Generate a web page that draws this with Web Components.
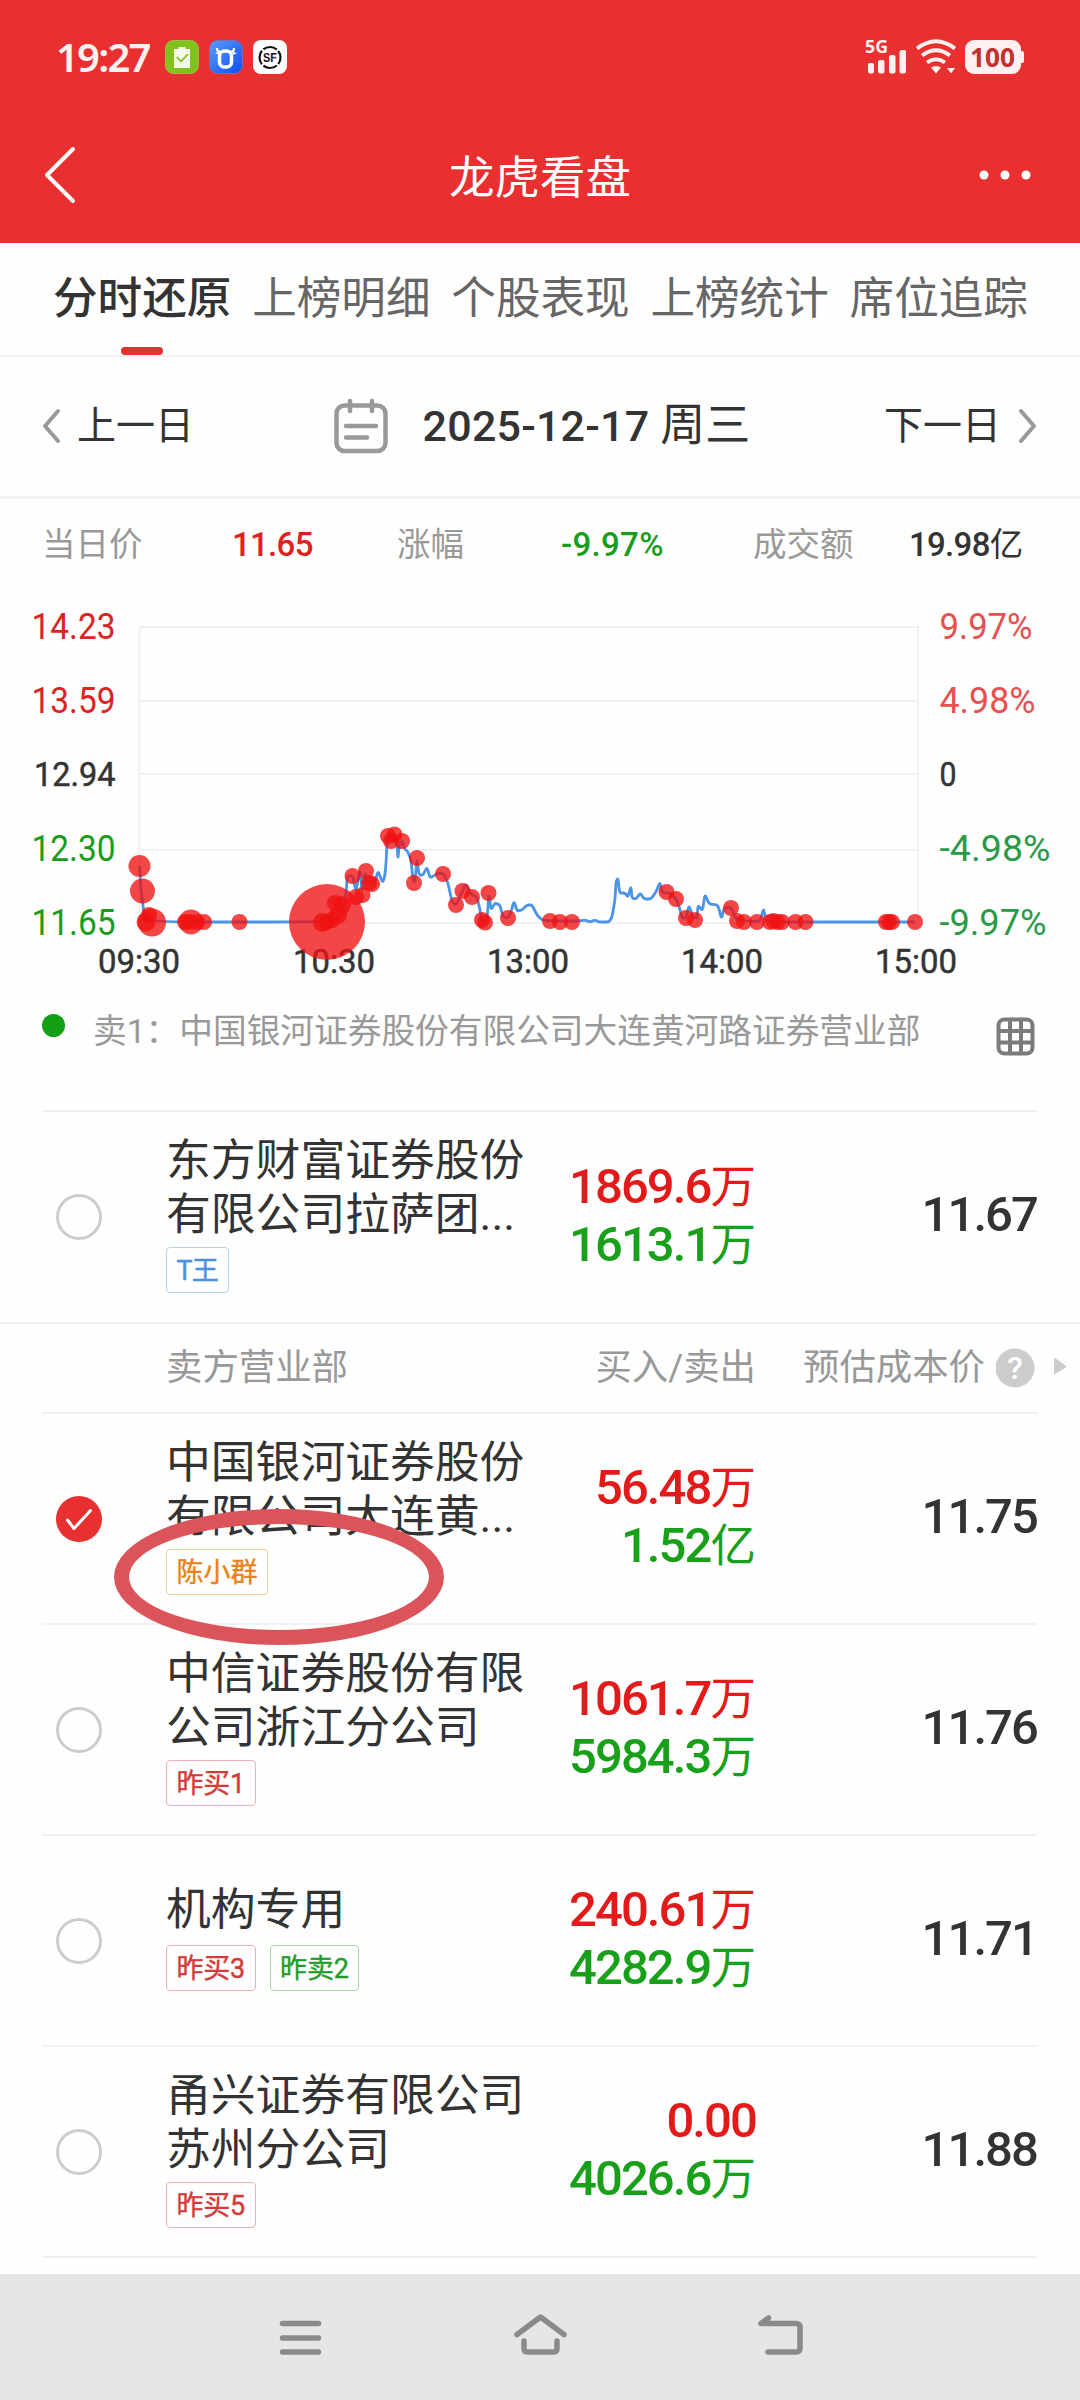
<!DOCTYPE html>
<html lang="zh-CN">
<head>
<meta charset="utf-8">
<title>龙虎看盘</title>
<style>
  body {
    margin: 0;
    background: #fefefe;
    color: #333;
    font-family: Roboto, "Noto Sans CJK SC", sans-serif;
  }
</style>
</head>
<body>
<lh-app></lh-app>

<script>
class LhStatusBar extends HTMLElement {
  constructor() {
    super();
    this.attachShadow({ mode: "open" });
  }

  static get styles() {
    return /* css */`
      :host {
        display: flex;
        align-items: center;
        justify-content: space-between;
        height: 114px;
        padding: 0 56px;
        box-sizing: border-box;
        color: #fff0f0;
      }

      .group {
        display: flex;
        align-items: center;
      }

      .time {
        font: 600 40px/48px "Noto Sans", sans-serif;
        letter-spacing: -1.8px;
        width: 109px;
        white-space: nowrap;
      }

      .apps {
        display: flex;
        gap: 10px;
      }

      svg {
        display: block;
      }
    `;
  }

  connectedCallback() {
    this.shadowRoot.innerHTML = /* html */`
    <style>${LhStatusBar.styles}</style>
    <div class="group">
      <div class="time">19:27</div>
      <div class="apps">
        <svg width="34" height="34" viewBox="0 0 34 34">
          <rect x=".5" y=".5" width="33" height="33" rx="8" fill="#7fc31c" stroke="#a9b84a"/>
          <path d="M9 9h4.500V7h7v2H25v19H9z" fill="#f3f8e8"/>
          <path d="M12 17l4 4.500 7-7.500" fill="none" stroke="#7fc31c" stroke-width="1.800"/>
        </svg>
        <svg width="34" height="34" viewBox="0 0 34 34">
          <defs>
            <linearGradient id="blue" x1="0" y1="0" x2="1" y2="1">
              <stop offset="0" stop-color="#5c9cff"/>
              <stop offset="1" stop-color="#0a50ee"/>
            </linearGradient>
          </defs>
          <rect x=".5" y=".5" width="33" height="33" rx="8" fill="url(#blue)" stroke="#7d6bb8"/>
          <path d="M8 8c0 4 2 4 5 4M25 8c0 4-2 4-5 4" fill="none" stroke="#fff" stroke-width="2.200"/>
          <path d="M6 13l4-1v3zM28 13l-4-1v3z" fill="#fff"/>
          <rect x="10.500" y="11" width="12" height="16" rx="5" fill="none" stroke="#fff" stroke-width="3.500"/>
        </svg>
        <svg width="34" height="34" viewBox="0 0 34 34">
          <rect width="34" height="34" rx="8" fill="#fff"/>
          <circle cx="17" cy="17.500" r="10.500" fill="none" stroke="#111" stroke-width="2.200" stroke-dasharray="14.500 2" stroke-dashoffset="-9"/>
          <text x="10" y="22" font-family="Liberation Sans" font-weight="700" font-size="12.500" textLength="14" lengthAdjust="spacingAndGlyphs" fill="#111">SF</text>
          <circle cx="22" cy="17.500" r="1" fill="#e33"/>
        </svg>
      </div>
    </div>
    <svg width="160" height="56" viewBox="0 -10 160 56" fill="#fff0f0">
      <text x="1" y="13.500" font-family="Open Sans" font-weight="700" font-size="18" textLength="23" lengthAdjust="spacingAndGlyphs">5G</text>
      <rect x="4" y="24" width="6" height="10.500" rx="2"/>
      <rect x="14" y="21" width="6.500" height="13.500" rx="2"/>
      <rect x="25" y="16" width="6.500" height="18.500" rx="2"/>
      <rect x="35.500" y="11" width="6.500" height="23.500" rx="2"/>
      <g fill="none" stroke="#fff0f0" stroke-width="4">
        <path d="M53 9.500Q72 -5 91 9.500"/>
        <path d="M58 16.500Q72 6 86 16.500"/>
        <path d="M63 23.500Q72 17 81 23.500"/>
      </g>
      <path d="M67 28.500q5-3 10 0l-5 6zM83 29h8l-4 5.500z"/>
      <rect x="101" y="1" width="56" height="34" rx="9"/>
      <rect x="153" y="12" width="7" height="12" rx="2"/>
      <text x="106" y="28" font-family="Open Sans" font-weight="700" font-size="27" textLength="45" lengthAdjust="spacingAndGlyphs" fill="#c33032">100</text>
    </svg>`;
  }
}
customElements.define("lh-status-bar", LhStatusBar);

class LhTitleBar extends HTMLElement {
  constructor() {
    super();
    this.attachShadow({ mode: "open" });
  }

  static get styles() {
    return /* css */`
      :host {
        display: grid;
        grid-template-columns: 1fr auto 1fr;
        align-items: center;
        height: 129px;
        padding: 0 49px 7px 44px;
        box-sizing: border-box;
        color: #fff;
      }

      .title {
        font-size: 45.500px;
        line-height: 54px;
        padding: 7px 0 0 5px;
      }

      .more {
        justify-self: end;
      }

      svg {
        display: block;
      }
    `;
  }

  connectedCallback() {
    this.shadowRoot.innerHTML = /* html */`
    <style>${LhTitleBar.styles}</style>
    <svg width="32" height="60" viewBox="0 0 32 60"><path d="M29 4L3 30l26 26" fill="none" stroke="#fff" stroke-width="4" stroke-linecap="round" stroke-linejoin="round"/></svg>
    <div class="title"><slot></slot></div>
    <svg class="more" width="52" height="10" viewBox="0 0 52 10" fill="#fff">
      <circle cx="5" cy="5" r="4.500"/><circle cx="26" cy="5" r="4.500"/><circle cx="47" cy="5" r="4.500"/>
    </svg>`;
  }
}
customElements.define("lh-title-bar", LhTitleBar);

class LhTabs extends HTMLElement {
  constructor() {
    super();
    this.attachShadow({ mode: "open" });
  }

  static get styles() {
    return /* css */`
      :host {
        display: flex;
        justify-content: space-between;
        height: 114px;
        padding: 0 52px;
        box-sizing: border-box;
        border-bottom: 2px solid #f2f2f2;
      }

      .tab {
        display: flex;
        flex-direction: column;
        justify-content: space-between;
        align-items: center;
        padding-top: 29px;
        font-size: 44.600px;
        line-height: 54px;
        color: #666;
      }

      .tab.active {
        color: #333;
        font-weight: 500;
        padding-left: 1px;
      }

      .tab.active::after {
        content: "";
        width: 42px;
        height: 8px;
        border-radius: 4px;
        background: #e83030;
      }
    `;
  }

  connectedCallback() {
    const tabs = this.getAttribute("items").split(",");
    this.shadowRoot.innerHTML = /* html */`
    <style>${LhTabs.styles}</style>
    ${tabs.map((tab, i) => `<div class="tab ${i === 0 ? "active" : ""}">${tab}</div>`).join("")}`;
  }
}
customElements.define("lh-tabs", LhTabs);

class LhDateNav extends HTMLElement {
  constructor() {
    super();
    this.attachShadow({ mode: "open" });
  }

  static get styles() {
    return /* css */`
      :host {
        display: flex;
        align-items: center;
        justify-content: space-between;
        height: 142px;
        padding: 0 40px 2px 41px;
        box-sizing: border-box;
        border-bottom: 3px solid #f4f4f4;
        font-size: 39px;
        line-height: 48px;
      }

      .step {
        display: flex;
        align-items: center;
        gap: 15px;
      }

      .day {
        display: flex;
        align-items: center;
        font-size: 45px;
        padding-left: 6px;
      }

      .day svg {
        margin-right: 35px;
      }

      .num {
        font-size: 43px;
        font-weight: 500;
        letter-spacing: 0.2px;
        margin-right: 11px;
      }

      svg {
        display: block;
        fill: none;
        stroke: #999;
        stroke-linecap: round;
        stroke-linejoin: round;
      }
    `;
  }

  connectedCallback() {
    this.shadowRoot.innerHTML = /* html */`
    <style>${LhDateNav.styles}</style>
    <div class="step">
      <svg width="21" height="36" viewBox="0 0 21 36"><path d="M17 3L4 18l13 15" stroke-width="4"/></svg>
      <span>上一日</span>
    </div>
    <div class="day">
      <svg width="54" height="56" viewBox="0 0 54 56" stroke-width="4.500">
        <rect x="2.500" y="7.500" width="49" height="45.500" rx="8"/>
        <path d="M16 3v10M38 3v10M12 28h30M12 39.500h21"/>
      </svg>
      <span class="num">2025-12-17</span><span>周三</span>
    </div>
    <div class="step">
      <span>下一日</span>
      <svg width="24" height="36" viewBox="0 0 24 36"><path d="M5 3l13 15L5 33" stroke-width="4"/></svg>
    </div>`;
  }
}
customElements.define("lh-date-nav", LhDateNav);

class LhDayStats extends HTMLElement {
  constructor() {
    super();
    this.attachShadow({ mode: "open" });
  }

  static get styles() {
    return /* css */`
      :host {
        display: grid;
        grid-template-columns: 190px 165px 164px 192px 156px auto;
        align-items: center;
        height: 91px;
        padding-left: 42px;
        box-sizing: border-box;
        font-size: 33.500px;
        line-height: 40px;
        color: #999;
      }

      .num {
        font-weight: 500;
        font-size: 33px;
        letter-spacing: -0.7px;
      }

      .up { color: #e02020; }

      .down {
        color: #189c1b;
        letter-spacing: 0.3px;
      }

      .total { color: #333; }
    `;
  }

  connectedCallback() {
    this.shadowRoot.innerHTML = /* html */`
    <style>${LhDayStats.styles}</style>
    <span>当日价</span><span class="num up">11.65</span>
    <span>涨幅</span><span class="num down">-9.97%</span>
    <span>成交额</span><span class="total"><span class="num">19.98</span>亿</span>`;
  }
}
customElements.define("lh-day-stats", LhDayStats);

// y axis rows: [y, price, price colour, percent, percent width, percent colour]
const AXIS = [
  [627, "14.23", "#dd2222", "9.97%", 93, "#e85050"],
  [701, "13.59", "#dd2222", "4.98%", 96, "#e85050"],
  [774, "12.94", "#333", "0", 17, "#333"],
  [850, "12.30", "#199c1c", "-4.98%", 111, "#2a9a48"],
  [923, "11.65", "#199c1c", "-9.97%", 107, "#2a9a48"]
];

const TIMES = [[139, "09:30"], [334, "10:30"], [528, "13:00"], [722, "14:00"], [916, "15:00"]];

const PRICE = `139.5,866 141,890 143.6,910 145,922 324,922 342,917 346,897 347,878 350,875 353,877 356,892
  360,868 362,893 365,872 367,882 372,883 375,882 378,871 381,879 383,882 385,875 386,863 387,843 389,835
  395,835 397,845 398,859 399,847 402,840 404,848 408,852 411,860 413,880 415,882 417,858 419,875 423,875
  427,867 430,878 435,875 438,873 444,874 448,883 452,902 456,905 460,897 466,883 470,894 477,897 480,910
  482,922 487,920 489,893 491,910 495,903 500,905 503,917 508,918 511,912 514,901 517,911 522,910 527,905
  532,905 537,915 542,920 550,921 580,921 585,920 590,922 595,920 599,922 609,922 612,917 615,900 616,882
  618,878 619.5,893 625,893 628,897 631,886 632,898 636,899 640.5,893 644,899 651,899 656,892 660,882
  662,893 671,893 678,902 682,918 686,918 689,905 693,917 697,918 698,905 702.5,911 705,894 709,904
  718,905 721.5,919 724,908 731,907 736,920 760,922 763.5,908 766,921 780,922 915,922`;

// trades: [x, y, radius], radius 8 when left out
const TRADES = [
  [139.5, 866, 11], [142.5, 891, 12.5], [149, 915], [146, 922, 9.5], [152, 922.5, 14],
  [185, 922], [189, 922], [191, 922, 12.5], [197, 922], [204, 922], [239.5, 922],
  [327, 922, 38], [322.5, 922.5, 9.5], [327, 922], [332, 920], [338, 915, 9], [335, 903], [342, 905, 9],
  [352.5, 876], [356, 897], [362.5, 895], [366, 871], [369, 883], [372, 884],
  [388, 836], [391, 841], [394.5, 834.5], [402, 841], [414, 883], [417, 858], [443, 874],
  [456, 905], [462.5, 891], [472, 897], [482, 920], [485, 922.5], [488.5, 893], [508, 918],
  [550, 921], [560, 922], [572, 922], [666.5, 892], [676, 899], [686, 918], [695, 920],
  [731, 908], [737, 921], [744, 922], [757, 922], [770, 922], [773.5, 921], [777.6, 922],
  [782, 922], [795.5, 922], [805.5, 922], [886, 922], [889, 922], [892, 922], [915, 922]
];

class LhChart extends HTMLElement {
  constructor() {
    super();
    this.attachShadow({ mode: "open" });
  }

  static get styles() {
    return /* css */`
      :host {
        display: block;
        height: 395px;
      }

      svg {
        display: block;
        font-family: Roboto, sans-serif;
      }

      .grid {
        fill: none;
        stroke: #f1f1f1;
        stroke-width: 2;
      }

      .axis { font-size: 36px; }
      .zero { font-size: 34px; }
      .time { font-size: 34px; fill: #333; }

      /* thin outline: between regular and medium weight */
      .zero, .time {
        stroke: #333;
        stroke-width: 0.5;
      }

      .price {
        fill: none;
        stroke: #4a94ea;
        stroke-width: 2.8;
        stroke-linejoin: round;
      }

      .trades {
        fill: #f01212;
        fill-opacity: 0.78;
      }
    `;
  }

  // rounds the corners of the polyline with quadratic midpoints
  get pricePath() {
    const points = PRICE.trim().split(/\s+/).map(p => p.split(",").map(Number));
    let d = `M${points[0]}`;
    for (let i = 1; i < points.length - 1; i++) {
      const [x, y] = points[i];
      const [nx, ny] = points[i + 1];
      const [px, py] = points[i - 1];
      d += `L${x - (x - px) * 0.3} ${y - (y - py) * 0.3}Q${x} ${y} ${x + (nx - x) * 0.3} ${y + (ny - y) * 0.3}`;
    }
    return `${d}L${points[points.length - 1]}`;
  }

  connectedCallback() {
    this.shadowRoot.innerHTML = /* html */`
    <style>${LhChart.styles}</style>
    <svg width="1080" height="395" viewBox="0 590 1080 395">
      <path class="grid" d="${AXIS.map(([y]) => `M139 ${y}H918`).join("")}M139.500 626V923M918 626V923"/>
      ${AXIS.map(([y, price, color, percent, width, percentColor], i) => {
        const base = [639, 713, 785.5, 860.5, 934.5][i];
        const type = i === 2 ? "axis zero" : "axis";
        const x = i === 2 ? 34 : 31.5;
        return `
      <text class="${type}" x="${x}" y="${base}" textLength="${115.5 - x}" lengthAdjust="spacingAndGlyphs" fill="${color}">${price}</text>
      <text class="${type}" x="939.500" y="${base}" textLength="${width}" lengthAdjust="spacingAndGlyphs" fill="${percentColor}">${percent}</text>`;
      }).join("")}
      ${TIMES.map(([x, time]) => `<text class="time" x="${x - 41}" y="973" textLength="82" lengthAdjust="spacingAndGlyphs">${time}</text>`).join("")}
      <path class="price" d="${this.pricePath}"/>
      <g class="trades">${TRADES.map(([x, y, r = 8]) => `<circle cx="${x}" cy="${y}" r="${r}"/>`).join("")}</g>
    </svg>`;
  }
}
customElements.define("lh-chart", LhChart);

class LhLegend extends HTMLElement {
  constructor() {
    super();
    this.attachShadow({ mode: "open" });
  }

  static get styles() {
    return /* css */`
      :host {
        display: flex;
        align-items: flex-start;
        height: 125px;
        padding: 24px 45px 0 42px;
        box-sizing: border-box;
        font-size: 33.700px;
        line-height: 46px;
        color: #999;
      }

      .dot {
        width: 23px;
        height: 23px;
        margin: 5px 28px 0 0;
        border-radius: 50%;
        background: #14a014;
      }

      svg {
        margin: 8px 0 0 auto;
      }
    `;
  }

  connectedCallback() {
    this.shadowRoot.innerHTML = /* html */`
    <style>${LhLegend.styles}</style>
    <div class="dot"></div>
    <div><slot></slot></div>
    <svg width="39" height="39" viewBox="0 0 39 39" fill="none" stroke="#7b7b7b" stroke-width="4">
      <rect x="2.500" y="2.500" width="34" height="34" rx="6"/>
      <path d="M14 2v35M25 2v35M2 14h35M2 25.500h35"/>
    </svg>`;
  }
}
customElements.define("lh-legend", LhLegend);

class LhTag extends HTMLElement {
  constructor() {
    super();
    this.attachShadow({ mode: "open" });
  }

  static get styles() {
    return /* css */`
      :host {
        display: block;
        height: 46px;
        padding: 0 9.5px;
        box-sizing: border-box;
        border: 1px solid #efb2b4;
        border-radius: 4px;
        font-size: 27px;
        line-height: 46px;
        letter-spacing: -0.2px;
        color: #d43a3a;
        -webkit-text-stroke: 0.4px;
      }

      :host([type="blue"]) {
        color: #4a90e2;
        border-color: #b4d2ec;
        letter-spacing: -0.8px;
      }

      :host([type="orange"]) {
        color: #e8821c;
        border-color: #f0cd9e;
        letter-spacing: 0;
      }

      :host([type="green"]) {
        color: #229c28;
        border-color: #a5d9a8;
      }
    `;
  }

  connectedCallback() {
    this.shadowRoot.innerHTML = /* html */`<style>${LhTag.styles}</style><slot></slot>`;
  }
}
customElements.define("lh-tag", LhTag);

class LhSeat extends HTMLElement {
  constructor() {
    super();
    this.attachShadow({ mode: "open" });
  }

  static get styles() {
    return /* css */`
      :host {
        display: grid;
        grid-template-columns: 110px 380px 1fr 283px;
        align-items: center;
        height: 211px;
        margin: 0 43px 0 42px;
        padding-left: 14px;
        box-sizing: border-box;
        border-bottom: 2px solid #f1f1f1;
      }

      :host([last]) {
        height: 212px;
        margin: 0;
        padding: 0 43px 0 56px;
      }

      .radio {
        display: block;
      }

      .seat {
        padding-bottom: 8px;
      }

      .name {
        min-height: 57px;
        padding-top: 1px;
        font-size: 44.800px;
        line-height: 54px;
        white-space: nowrap;
      }

      .tags {
        display: flex;
        gap: 14px;
        margin-top: 5px;
      }

      .amount {
        text-align: right;
        font-size: 45.500px;
        line-height: 57px;
        padding-bottom: 3px;
        margin-right: -2px;
        white-space: nowrap;
      }

      .num {
        font-size: 49px;
        font-weight: 500;
        letter-spacing: -1.9px;
      }

      .buy { color: #e31a1a; }
      .sell { color: #19a01b; }

      .cost {
        text-align: right;
        padding-bottom: 5px;
      }
    `;
  }

  amount(value) {
    const [, num, unit] = value.match(/^([\d.]+)(.*)$/);
    return `<span class="num">${num}</span>${unit}`;
  }

  connectedCallback() {
    const checked = this.hasAttribute("checked");
    this.shadowRoot.innerHTML = /* html */`
    <style>${LhSeat.styles}</style>
    <svg class="radio" width="46" height="46" viewBox="0 0 46 46" fill="none">
      ${checked
        ? `<circle cx="23" cy="23" r="23" fill="#e83030"/><path d="M11.500 24l6.500 8.500 16.500-18" stroke="#fff" stroke-width="3" stroke-linecap="round" stroke-linejoin="round"/>`
        : `<circle cx="23" cy="23" r="21.500" stroke="#ccc" stroke-width="3"/>`}
    </svg>
    <div class="seat">
      <div class="name">${this.getAttribute("name").replace("|", "<br>")}</div>
      <div class="tags"><slot></slot></div>
    </div>
    <div class="amount">
      <div class="buy">${this.amount(this.getAttribute("buy"))}</div>
      <div class="sell">${this.amount(this.getAttribute("sell"))}</div>
    </div>
    <div class="cost"><span class="num">${this.getAttribute("cost")}</span></div>`;
  }
}
customElements.define("lh-seat", LhSeat);

class LhSeatHead extends HTMLElement {
  constructor() {
    super();
    this.attachShadow({ mode: "open" });
  }

  static get styles() {
    return /* css */`
      :host {
        display: grid;
        grid-template-columns: 380px 210px 229px 1fr;
        align-items: center;
        height: 90px;
        margin: 0 42px;
        padding-left: 124px;
        box-sizing: border-box;
        border-bottom: 2px solid #f1f1f1;
        font-size: 36.400px;
        line-height: 44px;
        color: #999;
      }

      .right {
        text-align: right;
      }

      /* the scroll arrow hangs into the page margin */
      svg {
        display: block;
        justify-self: end;
        margin-right: -30px;
      }
    `;
  }

  connectedCallback() {
    this.shadowRoot.innerHTML = /* html */`
    <style>${LhSeatHead.styles}</style>
    <span>卖方营业部</span>
    <span class="right">买入/卖出</span>
    <span class="right">预估成本价</span>
    <svg width="72" height="40" viewBox="0 0 72 40">
      <circle cx="19" cy="20" r="19.500" fill="#ccc"/>
      <text x="19" y="31" text-anchor="middle" font-family="Roboto" font-weight="500" font-size="32" fill="#fff">?</text>
      <path d="M59 10l10 7q2 1.500 0 3l-10 6q-1 1-1-1V11q0-2 1-1z" fill="#ccc"/>
    </svg>`;
  }
}
customElements.define("lh-seat-head", LhSeatHead);

class LhNavBar extends HTMLElement {
  constructor() {
    super();
    this.attachShadow({ mode: "open" });
  }

  static get styles() {
    return /* css */`
      :host {
        display: flex;
        justify-content: center;
        align-items: center;
        gap: 180px;
        height: 126px;
        padding-bottom: 3px;
        box-sizing: border-box;
        background: #e6e6e6;
      }

      svg {
        fill: none;
        stroke: #8a8a8a;
        stroke-width: 5.5;
        stroke-linecap: round;
        stroke-linejoin: round;
      }
    `;
  }

  connectedCallback() {
    this.shadowRoot.innerHTML = /* html */`
    <style>${LhNavBar.styles}</style>
    <svg width="60" height="60" viewBox="0 0 60 60"><path d="M12.500 17.500h36M12.500 32h36M12.500 46h36"/></svg>
    <svg width="60" height="60" viewBox="0 0 60 60"><path d="M7 28.500L30.500 11 54 28.500M14 35v7.500q0 3.500 3.500 3.500h26q3.500 0 3.500-3.500V35"/></svg>
    <svg width="60" height="60" viewBox="0 0 60 60"><path d="M18.500 12l-7.500 5.500h35q4 0 4 4V42q0 4-4 4H18"/></svg>`;
  }
}
customElements.define("lh-nav-bar", LhNavBar);

class LhApp extends HTMLElement {
  constructor() {
    super();
    this.attachShadow({ mode: "open" });
  }

  static get styles() {
    return /* css */`
      :host {
        display: flex;
        flex-direction: column;
        position: relative;
        width: 1080px;
        height: 2400px;
        overflow: hidden;
      }

      header {
        background: #e83030;
      }

      .rule {
        border-top: 2px solid #f1f1f1;
        margin: 0 42px;
      }

      lh-nav-bar {
        margin-top: auto;
      }

      /* hand-drawn ring lying over the second seat */
      .ring {
        position: absolute;
        left: 114px;
        top: 1509px;
        width: 330px;
        height: 136px;
        box-sizing: border-box;
        border: 15px solid #da545a;
        border-radius: 50%;
      }
    `;
  }

  connectedCallback() {
    this.shadowRoot.innerHTML = /* html */`
    <style>${LhApp.styles}</style>
    <header>
      <lh-status-bar></lh-status-bar>
      <lh-title-bar>龙虎看盘</lh-title-bar>
    </header>
    <lh-tabs items="分时还原,上榜明细,个股表现,上榜统计,席位追踪"></lh-tabs>
    <lh-date-nav></lh-date-nav>
    <lh-day-stats></lh-day-stats>
    <lh-chart></lh-chart>
    <lh-legend>卖1：中国银河证券股份有限公司大连黄河路证券营业部</lh-legend>
    <div class="rule"></div>
    <lh-seat last name="东方财富证券股份|有限公司拉萨团..." buy="1869.6万" sell="1613.1万" cost="11.67">
      <lh-tag type="blue">T王</lh-tag>
    </lh-seat>
    <lh-seat-head></lh-seat-head>
    <lh-seat checked name="中国银河证券股份|有限公司大连黄..." buy="56.48万" sell="1.52亿" cost="11.75">
      <lh-tag type="orange">陈小群</lh-tag>
    </lh-seat>
    <lh-seat name="中信证券股份有限|公司浙江分公司" buy="1061.7万" sell="5984.3万" cost="11.76">
      <lh-tag>昨买1</lh-tag>
    </lh-seat>
    <lh-seat name="机构专用" buy="240.61万" sell="4282.9万" cost="11.71">
      <lh-tag>昨买3</lh-tag>
      <lh-tag type="green">昨卖2</lh-tag>
    </lh-seat>
    <lh-seat name="甬兴证券有限公司|苏州分公司" buy="0.00" sell="4026.6万" cost="11.88">
      <lh-tag>昨买5</lh-tag>
    </lh-seat>
    <lh-nav-bar></lh-nav-bar>
    <div class="ring"></div>`;
  }
}
customElements.define("lh-app", LhApp);
</script>
</body>
</html>
